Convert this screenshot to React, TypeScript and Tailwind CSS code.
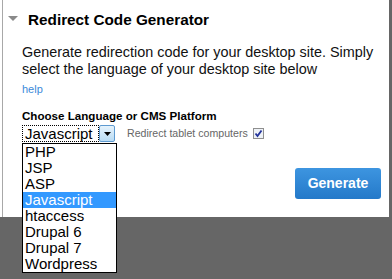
const options = ["PHP", "JSP", "ASP", "Javascript", "htaccess", "Drupal 6", "Drupal 7", "Wordpress"];

export default function App() {
  return (
    <div className="relative w-[392px] h-[279px] bg-[#666666] overflow-hidden font-['Liberation_Sans',Arial,sans-serif]">
      <div className="w-[389px] h-[217px] bg-white pl-[2px]">
        <div className="h-full border-l border-[#a8a8a8] pt-[12px]">
          <div className="flex items-center h-[16px]">
            <svg width="10" height="6" viewBox="0 0 10 6" className="ml-[5px] mt-[-2px]">
              <path d="M0 0 L10 0 L5 5 Z" fill="#8a8a8a" />
            </svg>
            <h1 className="ml-[10px] text-[15.3px] font-bold text-black leading-[16px]">Redirect Code Generator</h1>
          </div>
          <div className="pl-[19px] pt-[16px]">
            <p className="text-[14.4px] leading-[17px] text-[#111]">
              Generate redirection code for your desktop site. Simply select the language of your desktop site below
            </p>
            <a className="block mt-[5px] text-[11px] leading-[13px] text-[#3b8ad9]">help</a>
            <div className="mt-[13px] text-[11.6px] font-bold leading-[14px] text-black">Choose Language or CMS Platform</div>
            <div className="flex items-center mt-[2px] h-[17px]">
              <div className="relative flex w-[93px] h-[17px]">
                <div className="flex-1 border border-dotted border-black text-[15px] leading-[15px] pl-[2px] text-black">Javascript</div>
                <div className="w-[16px] h-[17px] border border-[#5e9ad0] rounded-[2px] bg-gradient-to-b from-[#e6f3fc] to-[#b9dbf3] flex items-center justify-center">
                  <svg width="7" height="4" viewBox="0 0 7 4">
                    <path d="M0 0 L7 0 L3.5 4 Z" fill="#000" />
                  </svg>
                </div>
                <div className="absolute left-0 top-[18px] w-[95px] border border-black bg-white z-10">
                  {options.map((o) => (
                    <div
                      key={o}
                      className={
                        o === "Javascript"
                          ? "h-[16px] px-[2px] text-[15px] leading-[16px] bg-[#3399ff] text-white"
                          : "h-[16px] px-[2px] text-[15px] leading-[16px] text-black"
                      }
                    >
                      {o}
                    </div>
                  ))}
                </div>
              </div>
              <span className="ml-[12px] text-[10.6px] text-[#666]">Redirect tablet computers</span>
              <span className="ml-[5px] w-[11px] h-[11px] border border-[#8f8f8f] bg-[#eef2f7] flex items-center justify-center">
                <svg width="9" height="9" viewBox="0 0 9 9">
                  <path d="M1.5 4.5 L3.5 7 L7.5 1.5" stroke="#22329a" strokeWidth="1.8" fill="none" />
                </svg>
              </span>
            </div>
          </div>
          <div className="flex justify-end pr-[8px] mt-[26px]">
            <button className="w-[86px] h-[31px] rounded-[3px] bg-gradient-to-b from-[#3d95e0] to-[#2479c9] text-white text-[14px] font-bold">
              Generate
            </button>
          </div>
        </div>
      </div>
    </div>
  );
}
